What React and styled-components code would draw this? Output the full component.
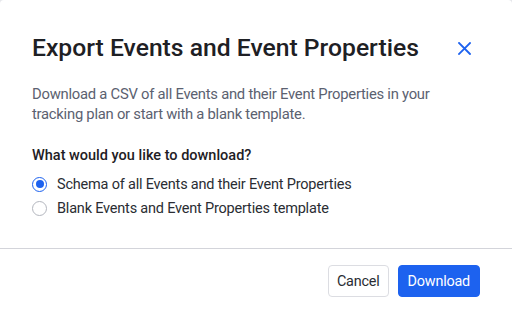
import styled, { createGlobalStyle } from 'styled-components';

const GlobalStyle = createGlobalStyle`
  html, body {
    margin: 0;
    padding: 0;
    background: #e6e7eb;
  }
  body {
    font-family: Roboto, "Noto Sans", sans-serif;
    -webkit-font-smoothing: antialiased;
  }
`

const Modal = styled.div`
  width: 512px;
  height: 312px;
  background: #ffffff;
  border-radius: 4px 4px 0 0;
  display: flex;
  flex-direction: column;
  box-sizing: border-box;
`

const Body = styled.div`
  padding: 30px 32px 0;
  flex: 1;
`

const Header = styled.div`
  display: flex;
  align-items: center;
  justify-content: space-between;
`

const Title = styled.h2`
  margin: 0;
  font-size: 24.7px;
  line-height: 36px;
  font-weight: 500;
  color: #1e2024;
`

const CloseButton = styled.button`
  border: none;
  background: none;
  padding: 0;
  margin-right: 9px;
  width: 14px;
  height: 14px;
  display: flex;
  align-items: center;
  justify-content: center;
  cursor: pointer;
`

const Description = styled.p`
  margin: 18px 0 0;
  font-size: 14.8px;
  letter-spacing: -0.25px;
  line-height: 20px;
  color: #5b6170;
  max-width: 410px;
`

const Question = styled.div`
  margin-top: 22px;
  font-size: 14.5px;
  line-height: 20px;
  font-weight: 500;
  color: #1e2024;
`

const Options = styled.div`
  display: flex;
  flex-direction: column;
  margin-top: 6px;
`

const Option = styled.label`
  display: flex;
  align-items: center;
  gap: 10px;
  height: 24px;
  font-size: 14.5px;
  letter-spacing: -0.2px;
  color: #2a2d33;
  cursor: pointer;
`

const Radio = styled.span`
  width: 15px;
  height: 15px;
  box-sizing: border-box;
  border-radius: 50%;
  border: ${props => props.checked ? '1.5px solid #1d62ef' : '1px solid #b3b6be'};
  display: flex;
  align-items: center;
  justify-content: center;
  flex-shrink: 0;

  &::after {
    content: '';
    width: 8px;
    height: 8px;
    border-radius: 50%;
    background: ${props => props.checked ? '#1d62ef' : 'transparent'};
  }
`

const Footer = styled.div`
  border-top: 1px solid #d3d4da;
  padding: 16px 32px 15px;
  display: flex;
  justify-content: flex-end;
  gap: 9px;
`

const Button = styled.button`
  height: 32px;
  padding: 0 ${props => props.primary ? '9px' : '8px'};
  border-radius: 4px;
  font-family: inherit;
  font-size: 14.4px;
  letter-spacing: -0.2px;
  border: 1px solid ${props => props.primary ? '#1d62ef' : '#dcdde2'};
  background: ${props => props.primary ? '#1d62ef' : '#ffffff'};
  color: ${props => props.primary ? '#ffffff' : '#2a2d33'};
  cursor: pointer;
`

function App() {
  return (
    <>
      <GlobalStyle />
      <Modal>
        <Body>
          <Header>
            <Title>Export Events and Event Properties</Title>
            <CloseButton aria-label="Close">
              <svg width="13" height="13" viewBox="0 0 13 13">
                <path d="M1 1L12 12M12 1L1 12" stroke="#1d62ef" strokeWidth="1.8" strokeLinecap="square" />
              </svg>
            </CloseButton>
          </Header>
          <Description>
            Download a CSV of all Events and their Event Properties in your tracking plan or start with a blank template.
          </Description>
          <Question>What would you like to download?</Question>
          <Options>
            <Option>
              <Radio checked />
              Schema of all Events and their Event Properties
            </Option>
            <Option>
              <Radio />
              Blank Events and Event Properties template
            </Option>
          </Options>
        </Body>
        <Footer>
          <Button>Cancel</Button>
          <Button primary>Download</Button>
        </Footer>
      </Modal>
    </>
  );
}

export default App;
